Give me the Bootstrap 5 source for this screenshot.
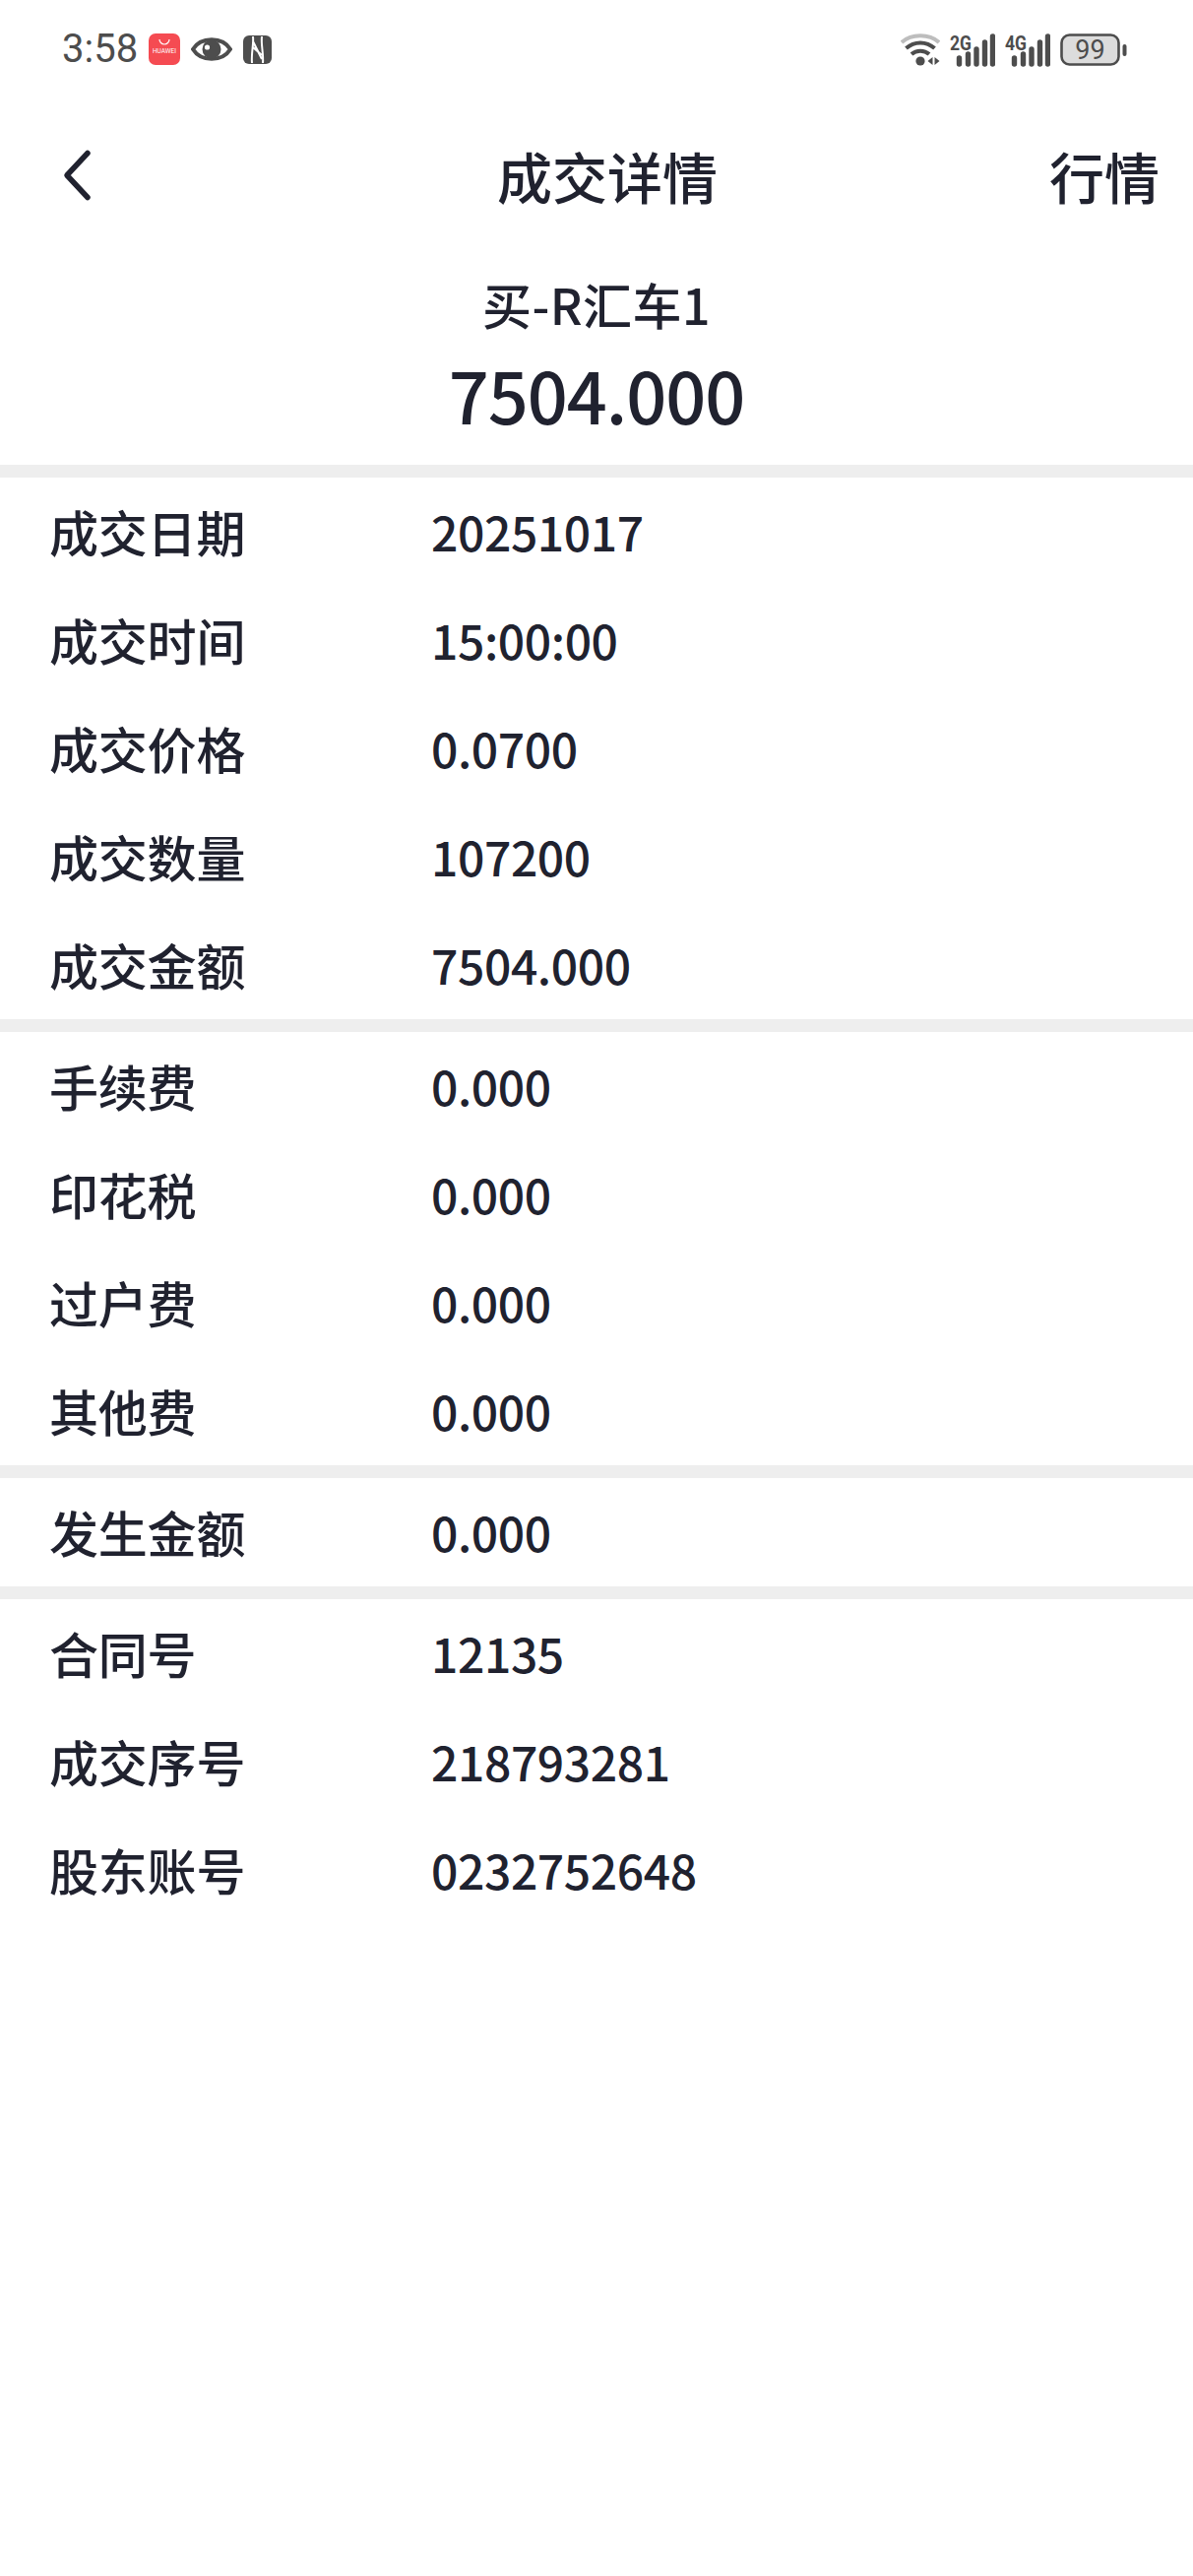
<!DOCTYPE html>
<html lang="zh-CN">
<head>
    <meta charset="UTF-8">
    <meta name="viewport" content="width=device-width, initial-scale=1.0">
    <title>成交详情</title>
    <link href="https://cdn.jsdelivr.net/npm/bootstrap@5.3.0/dist/css/bootstrap.min.css" rel="stylesheet">
    <style>
        body {
            background: #fff;
            color: #20222f;
            font-family: "Noto Sans CJK SC", "Noto Sans", sans-serif;
        }
        .status-bar { height: 100px; padding: 0 67px 0 63px; color: #4d4d4d; }
        .status-left { gap: 11px; }
        .status-right { gap: 10px; }
        .status-time { font-family: Roboto, sans-serif; font-size: 40px; line-height: 1; }
        .top-nav { height: 156px; padding: 0 34px 0 60px; }
        .nav-title { left: 0; right: 0; text-align: center; font-size: 56px; font-weight: 500; line-height: 1; padding-left: 22px; }
        .nav-link-text { font-size: 56px; line-height: 1; font-weight: 500; }
        .head-sub { font-size: 50px; font-weight: 500; line-height: 1; height: 60px; margin-top: 27px; letter-spacing: .5px; }
        .head-amount { font-size: 72px; font-weight: 500; line-height: 1; margin-top: 21px; height: 108px; letter-spacing: -1px; }
        .gap-bar { height: 13px; background: #eeeeee; }
        .info-row { height: 110px; padding: 0 0 2px 50px; font-size: 50px; font-weight: 500; line-height: 1; }
        .info-label { width: 388px; letter-spacing: -.2px; }
        .info-val { font-size: 48px; letter-spacing: -.4px; }
    </style>
</head>
<body>
    <div class="status-bar d-flex align-items-center justify-content-between">
        <div class="status-left d-flex align-items-center">
            <span class="status-time">3:58</span>
            <svg width="32" height="32" viewBox="0 0 32 32"><rect width="32" height="32" rx="7" fill="#f54b52"/><path d="M11 6a5 5 0 0 0 10 0" fill="none" stroke="#fff" stroke-width="1.2"/><text x="16" y="20" text-anchor="middle" font-family="Roboto" font-size="6.5" fill="#fff">HUAWEI</text></svg>
            <svg width="42" height="28" viewBox="0 0 42 28"><path d="M2 14C10 1 32 1 40 14C32 27 10 27 2 14Z" fill="none" stroke="#4d4d4d" stroke-width="4"/><circle cx="21" cy="14" r="9.5" fill="#4d4d4d"/><circle cx="16.5" cy="12" r="2.6" fill="#fff"/></svg>
            <svg width="29" height="29" viewBox="0 0 29 29"><rect width="29" height="29" rx="6" fill="#4d4d4d"/><path d="M10 1C11 9 8 18 9 28M19 1C18 10 21 19 20 28M10 6L19 24M10 12L19 20" fill="none" stroke="#fff" stroke-width="2"/></svg>
        </div>
        <div class="status-right d-flex align-items-center">
            <svg width="40" height="33" viewBox="0 0 40 33"><path d="M1 9C11 0 29 0 39 9" fill="none" stroke="#bdbdbd" stroke-width="4"/><path d="M5.5 15C14 7.5 26 7.5 34.5 15" fill="none" stroke="#4d4d4d" stroke-width="4"/><path d="M11 21C16 16.5 24 16.5 29 21" fill="none" stroke="#4d4d4d" stroke-width="4"/><circle cx="20" cy="28" r="4.6" fill="#4d4d4d"/><path d="M32.5 24v8l-5-4zM34.5 24l5 4-5 4z" fill="#4d4d4d"/></svg>
            <svg width="46" height="42" viewBox="0 -6 46 42"><text x="0" y="16" font-family="Roboto" font-weight="700" font-size="21" textLength="22" lengthAdjust="spacingAndGlyphs" fill="#4d4d4d">2G</text><path d="M9.5 24v6M18.5 20v10M27 15v15M35.5 8v22M43.5 2v28" stroke="#4d4d4d" stroke-width="5.4" stroke-linecap="round"/></svg>
            <svg width="46" height="42" viewBox="0 -6 46 42"><text x="0" y="16" font-family="Roboto" font-weight="700" font-size="21" textLength="22" lengthAdjust="spacingAndGlyphs" fill="#4d4d4d">4G</text><path d="M9.5 24v6M18.5 20v10M27 15v15M35.5 8v22M43.5 2v28" stroke="#4d4d4d" stroke-width="5.4" stroke-linecap="round"/></svg>
            <svg width="68" height="33" viewBox="0 0 68 33"><rect x="1.5" y="1.5" width="58" height="30" rx="8" fill="#dcdcdc" stroke="#4d4d4d" stroke-width="2.6"/><text x="30.5" y="26" text-anchor="middle" font-family="Roboto" font-size="27" fill="#4d4d4d">99</text><rect x="63.5" y="11" width="4" height="12" rx="2" fill="#4d4d4d"/></svg>
        </div>
    </div>

    <div class="top-nav d-flex align-items-center justify-content-between position-relative">
        <svg width="34" height="54" viewBox="0 0 34 54"><path d="M29 4.5L8 27L29 49.5" fill="none" stroke="#20222f" stroke-width="5.5" stroke-linecap="round" stroke-linejoin="round"/></svg>
        <div class="nav-title position-absolute">成交详情</div>
        <div class="nav-link-text">行情</div>
    </div>

    <div class="text-center">
        <div class="head-sub">买-R汇车1</div>
        <div class="head-amount">7504.000</div>
    </div>
    <div class="gap-bar"></div>

    <div id="rows"></div>
    <div class="gap-bar"></div>
    <div class="info-row d-flex align-items-center"><span class="info-label">手续费</span><span class="info-val">0.000</span></div>
    <div class="info-row d-flex align-items-center"><span class="info-label">印花税</span><span class="info-val">0.000</span></div>
    <div class="info-row d-flex align-items-center"><span class="info-label">过户费</span><span class="info-val">0.000</span></div>
    <div class="info-row d-flex align-items-center"><span class="info-label">其他费</span><span class="info-val">0.000</span></div>
    <div class="gap-bar"></div>
    <div class="info-row d-flex align-items-center"><span class="info-label">发生金额</span><span class="info-val">0.000</span></div>
    <div class="gap-bar"></div>
    <div class="info-row d-flex align-items-center"><span class="info-label">合同号</span><span class="info-val">12135</span></div>
    <div class="info-row d-flex align-items-center"><span class="info-label">成交序号</span><span class="info-val">218793281</span></div>
    <div class="info-row d-flex align-items-center"><span class="info-label">股东账号</span><span class="info-val">0232752648</span></div>

    <script>
        const rows = [["成交日期","20251017"],["成交时间","15:00:00"],["成交价格","0.0700"],["成交数量","107200"],["成交金额","7504.000"]];
        document.getElementById("rows").innerHTML = rows.map(r =>
            `<div class="info-row d-flex align-items-center"><span class="info-label">${r[0]}</span><span class="info-val">${r[1]}</span></div>`).join("");
    </script>
    <script src="https://cdn.jsdelivr.net/npm/bootstrap@5.3.0/dist/js/bootstrap.bundle.min.js"></script>
</body>
</html>
